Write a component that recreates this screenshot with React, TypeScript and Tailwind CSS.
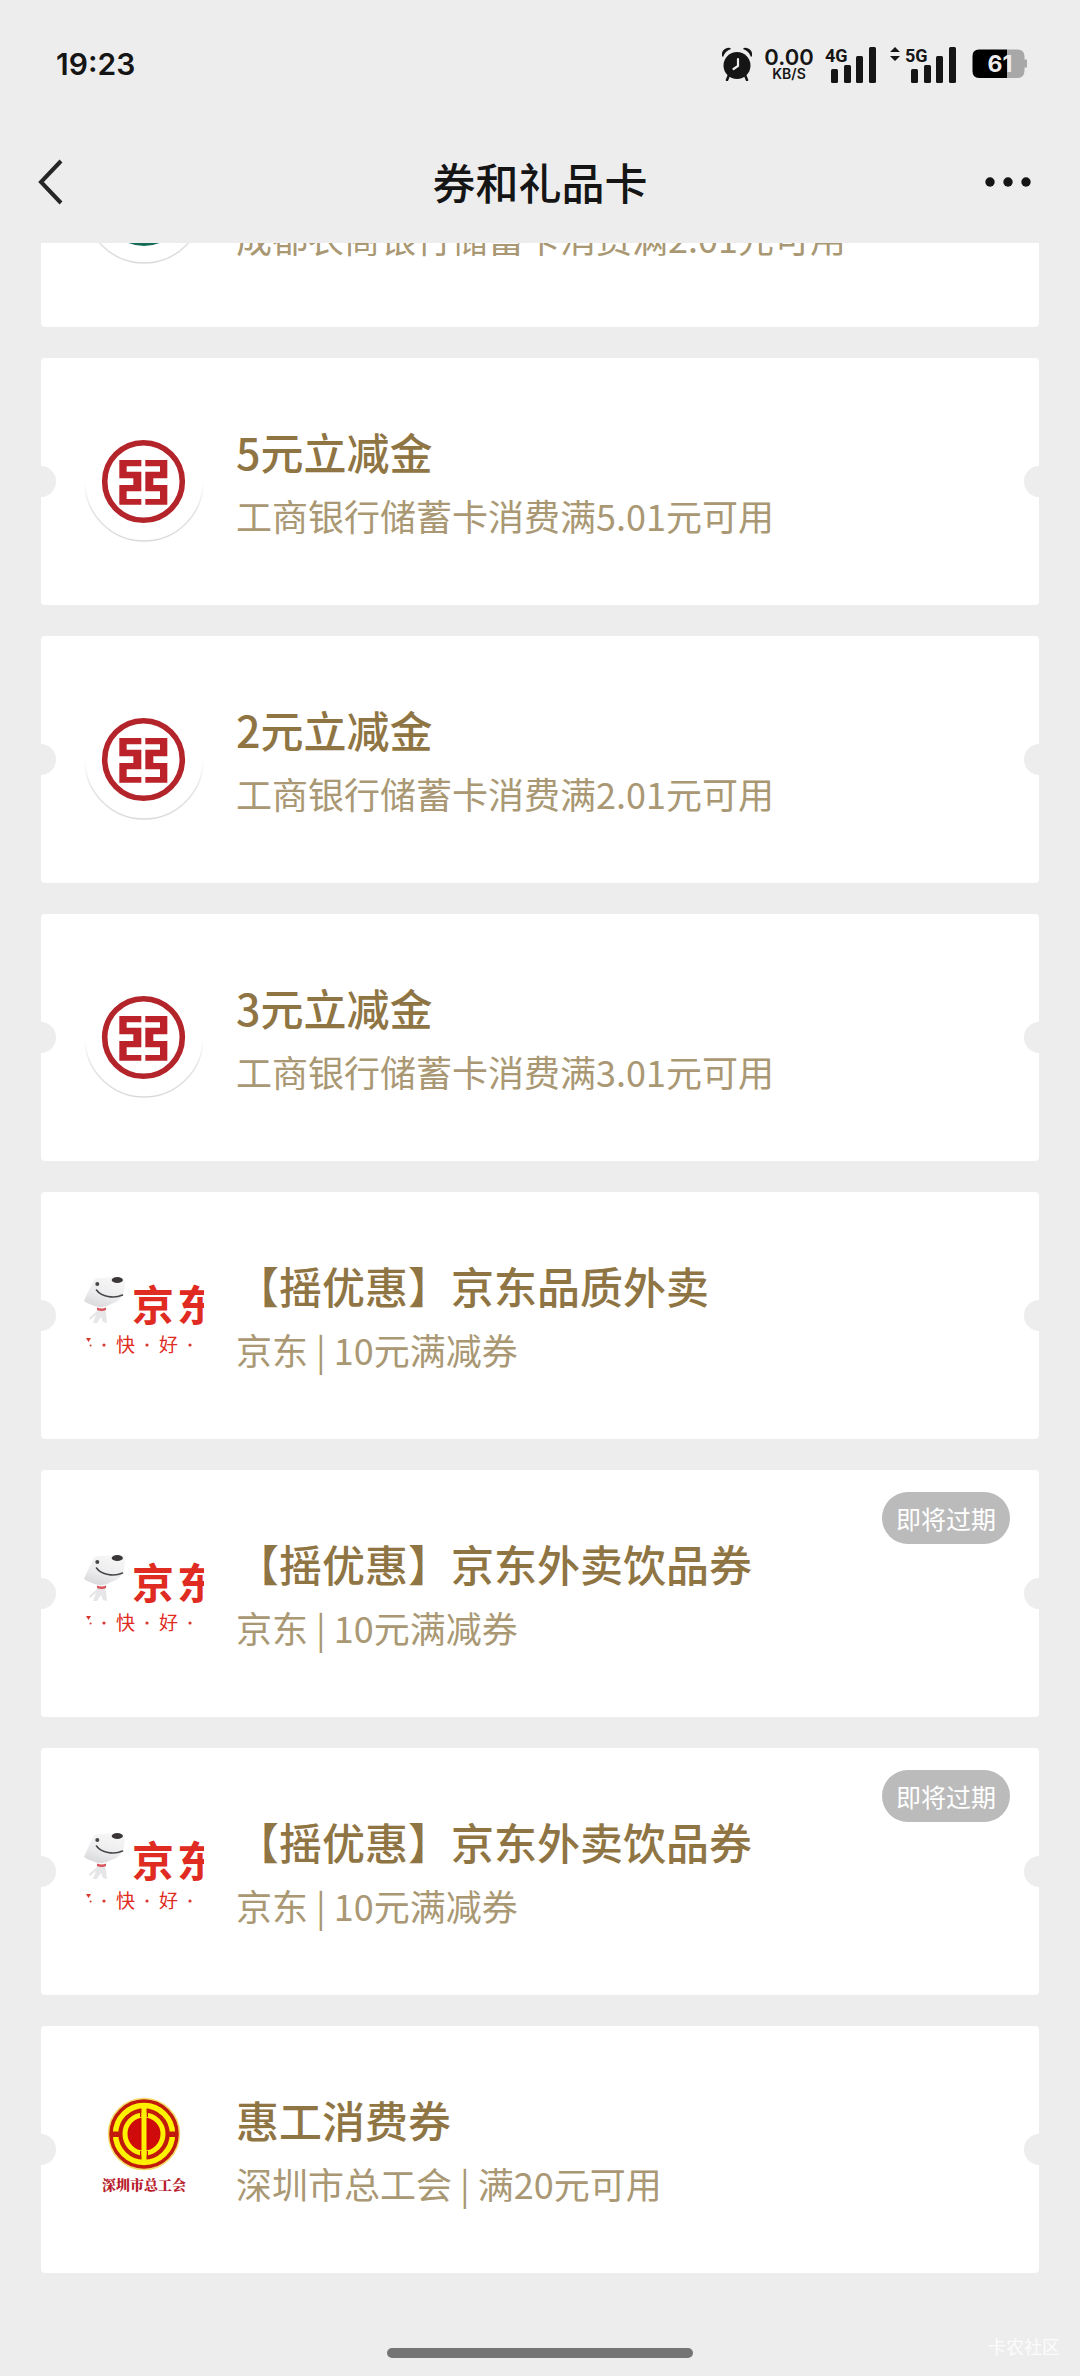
import { useId } from "react";
import type { ReactNode } from "react";

type Brand = "rural" | "icbc" | "jd" | "union";

interface Coupon {
  id: number;
  brand: Brand;
  title: string;
  detail: string;
  expiring?: boolean;
}

const coupons: Coupon[] = [
  { id: 1, brand: "rural", title: "2元立减金", detail: "成都农商银行储蓄卡消费满2.01元可用" },
  { id: 2, brand: "icbc", title: "5元立减金", detail: "工商银行储蓄卡消费满5.01元可用" },
  { id: 3, brand: "icbc", title: "2元立减金", detail: "工商银行储蓄卡消费满2.01元可用" },
  { id: 4, brand: "icbc", title: "3元立减金", detail: "工商银行储蓄卡消费满3.01元可用" },
  { id: 5, brand: "jd", title: "【摇优惠】京东品质外卖", detail: "京东 | 10元满减券" },
  { id: 6, brand: "jd", title: "【摇优惠】京东外卖饮品券", detail: "京东 | 10元满减券", expiring: true },
  { id: 7, brand: "jd", title: "【摇优惠】京东外卖饮品券", detail: "京东 | 10元满减券", expiring: true },
  { id: 8, brand: "union", title: "惠工消费券", detail: "深圳市总工会 | 满20元可用" },
];

function RoundFrame({ children }: { children: ReactNode }) {
  const id = useId();
  return (
    <svg viewBox="0 0 120 120" className="size-full" aria-hidden="true">
      <defs>
        <linearGradient id={id} x1="0" y1="0" x2="0" y2="1">
          <stop offset="0.5" stopColor="#e4e4e4" stopOpacity="0" />
          <stop offset="0.75" stopColor="#e4e4e4" />
          <stop offset="1" stopColor="#dadada" />
        </linearGradient>
      </defs>
      <circle cx="60" cy="60" r="59" fill="none" stroke={`url(#${id})`} strokeWidth="1.5" />
      {children}
    </svg>
  );
}

const HALF_GLYPH =
  "M70 78H136V97H92V113H136V172H92V195H136V212H70V153H112V133H70Z";

function IcbcLogo() {
  return (
    <RoundFrame>
      <circle cx="59.5" cy="59.5" r="38.8" fill="none" stroke="#b4252b" strokeWidth="5.6" />
      <g transform="translate(12 12) scale(0.3333)" fill="#bb2229">
        <path d={HALF_GLYPH} />
        <path d={HALF_GLYPH} transform="translate(284 0) scale(-1 1)" />
      </g>
    </RoundFrame>
  );
}

function RuralBankLogo() {
  return (
    <RoundFrame>
      <circle cx="60" cy="60" r="42" fill="#146b56" />
    </RoundFrame>
  );
}

function JdLogo() {
  const id = useId();
  return (
    <svg viewBox="0 0 120 120" className="size-full overflow-hidden" aria-hidden="true">
      <defs>
        <linearGradient id={id} x1="0.7" y1="0" x2="0.3" y2="1">
          <stop offset="0" stopColor="#f7f7f7" />
          <stop offset="0.6" stopColor="#ececee" />
          <stop offset="1" stopColor="#d9d9dc" />
        </linearGradient>
      </defs>
      <path
        d="M9 26Q10 22 15 22L33 21Q41 21 41 26Q41 34 38 40Q35 46 27 48Q21 52 15 51Q6 49 0 45Q4 35 9 26Z"
        fill={`url(#${id})`}
      />
      <path d="M14 53Q17 55 21 53L22 58L23 67L19 66L17 61L13 67H9L12 59L6 64L5 62L12 56Z" fill="#e6e6e9" />
      <path d="M13 51.5Q18 53.5 22 51.5V54Q18 56 13 54Z" fill="#d8545a" />
      <ellipse cx="33.3" cy="24" rx="5.6" ry="3" fill="#3a3638" />
      <circle cx="13.3" cy="28" r="2" fill="#4a4648" />
      <path d="M12.5 34Q16 39 24 40.5Q32 42 38.5 39" fill="none" stroke="#4a4648" strokeWidth="1.6" strokeLinecap="round" />
      <g fill="#e02b22" fontFamily='"Noto Sans CJK SC", sans-serif'>
        <text x="48" y="65" fontSize="42" fontWeight="700">京</text>
        <text x="93" y="65" fontSize="42" fontWeight="700">东</text>
        <text x="32" y="96" fontSize="19" fontWeight="400">快</text>
        <text x="75" y="96" fontSize="19" fontWeight="400">好</text>
      </g>
      <g fill="#d8382f">
        <path d="M2 82H7L4.500 86Z" />
        <circle cx="6.600" cy="89.500" r="1" />
        <circle cx="20" cy="89" r="1.600" />
        <circle cx="63" cy="89" r="1.600" />
        <circle cx="106" cy="89" r="1.600" />
      </g>
    </svg>
  );
}

function UnionLogo() {
  return (
    <svg viewBox="0 0 120 120" className="size-full" aria-hidden="true">
      <circle cx="60" cy="44" r="35.500" fill="#c11a0c" stroke="#f3dc6a" strokeWidth="1.500" />
      <circle cx="60" cy="44" r="28.500" fill="none" stroke="#fff200" strokeWidth="5.500" />
      <path d="M27 41.500H38V47H27ZM82 41.500H93V47H82Z" fill="#c11a0c" />
      <circle cx="60" cy="44" r="19" fill="#cf0a0a" stroke="#fff200" strokeWidth="5" />
      <path d="M56 21H57.500V27H56ZM62.500 21H64V27H62.500ZM56 61H57.500V67H56ZM62.500 61H64V67H62.500Z" fill="#c11a0c" />
      <path d="M57.500 16H62.500V73H57.500Z" fill="#fff200" />
      <text
        x="60"
        y="100"
        textAnchor="middle"
        fontSize="14"
        fontWeight="900"
        fill="#b81c2c"
        fontFamily='"Noto Serif CJK SC", "Noto Sans CJK SC", serif'
      >
        深圳市总工会
      </text>
    </svg>
  );
}

function BrandLogo({ brand }: { brand: Brand }) {
  if (brand === "icbc") return <IcbcLogo />;
  if (brand === "jd") return <JdLogo />;
  if (brand === "union") return <UnionLogo />;
  return <RuralBankLogo />;
}

function CouponCard({ coupon }: { coupon: Coupon }) {
  return (
    <li className="relative flex h-[247px] shrink-0 items-start overflow-hidden rounded-[4px] bg-white pl-[43px]">
      <span className="absolute top-[108px] -left-4 size-[31px] rounded-full bg-[#ededed]" />
      <span className="absolute top-[108px] -right-4 size-[31px] rounded-full bg-[#ededed]" />
      <div className="mt-16 size-[120px] shrink-0">
        <BrandLogo brand={coupon.brand} />
      </div>
      <div className="mt-[61px] ml-8 min-w-0 whitespace-nowrap">
        <h2 className="text-[43px] leading-[64px] font-medium text-[#8f7544]">{coupon.title}</h2>
        <p className="text-[36px] leading-[64px] font-normal text-[#a99873]">{coupon.detail}</p>
      </div>
      {coupon.expiring && (
        <span className="absolute top-[22px] right-[29px] rounded-full bg-[#bbbbbb] px-[14px] text-[25px] leading-[52px] text-white">
          即将过期
        </span>
      )}
    </li>
  );
}

function AlarmIcon() {
  return (
    <svg viewBox="0 0 32 34" className="h-[34px] w-8" aria-hidden="true">
      <circle cx="16" cy="18.500" r="13.500" fill="#151515" />
      <path d="M1 9Q0 3 6 1Q9 0 10 2Q4 4 2 10ZM31 9Q32 3 26 1Q23 0 22 2Q28 4 30 10Z" fill="#151515" />
      <path d="M8 28L6 33M24 28L26 33" stroke="#151515" strokeWidth="2.500" strokeLinecap="round" />
      <path d="M17 12V19L12.500 22" fill="none" stroke="#ededed" strokeWidth="2.200" strokeLinecap="round" />
    </svg>
  );
}

function SignalIcon({ label }: { label: string }) {
  return (
    <svg viewBox="0 0 52 38" className="h-[38px] w-[52px]" role="img" aria-label={label}>
      <text
        x="0"
        y="17"
        fontSize="18"
        fontWeight="700"
        fill="#151515"
        fontFamily='"Liberation Sans Narrow", Roboto, sans-serif'
      >
        {label}
      </text>
      <g fill="#151515">
        <rect x="6" y="24" width="7" height="14" rx="1.500" />
        <rect x="19" y="20" width="7" height="18" rx="1.500" />
        <rect x="31" y="11" width="7" height="27" rx="1.500" />
        <rect x="44" y="2" width="7" height="36" rx="1.500" />
      </g>
    </svg>
  );
}

function StatusBar() {
  return (
    <div className="flex h-32 shrink-0 items-center justify-between pr-[52px] pl-14 font-['Inter',sans-serif] text-[#151515]">
      <time className="text-[30px] font-semibold">19:23</time>
      <div className="flex items-center">
        <AlarmIcon />
        <div className="ml-[10px] flex w-[52px] flex-col items-center">
          <span className="text-[22px] leading-[20px] font-semibold">0.00</span>
          <span className="text-[14px] leading-[14px] font-semibold">KB/S</span>
        </div>
        <div className="mr-3 ml-[10px]">
          <SignalIcon label="4G" />
        </div>
        <svg viewBox="0 0 12 38" className="mr-1 h-[38px] w-3" aria-hidden="true">
          <path d="M6 2L11 7H1ZM1 11H11L6 16Z" fill="#151515" />
        </svg>
        <SignalIcon label="5G" />
        <svg viewBox="0 0 56 30" className="ml-[15px] h-[30px] w-14" role="img" aria-label="61%">
          <path d="M35 0.500H46Q52 0.500 52.500 7V10.500H55V18.500H52.500V22Q52 29 46 29H35Z" fill="#a8a8a8" />
          <path d="M7 0.500H35V29H7Q0.500 29 0.500 22V7Q0.500 0.500 7 0.500Z" fill="#000000" />
          <text x="28" y="23" textAnchor="middle" fontSize="23" fontWeight="700" fill="#ededed" fontFamily="Inter, sans-serif">
            61
          </text>
        </svg>
      </div>
    </div>
  );
}

export default function App() {
  return (
    <div className="relative flex h-screen flex-col overflow-hidden bg-[#ededed] font-['Noto_Sans_CJK_SC',sans-serif]">
      <StatusBar />
      <header className="flex h-[115px] shrink-0 items-start justify-between px-8">
        <button type="button" aria-label="返回" className="flex h-[108px] w-20 items-center">
          <svg viewBox="0 0 36 48" className="h-12 w-9" aria-hidden="true">
            <path d="M29 3L9 24L29 45" fill="none" stroke="#262626" strokeWidth="4" />
          </svg>
        </button>
        <h1 className="text-[43px] leading-[106px] font-medium text-[#151515]">券和礼品卡</h1>
        <button type="button" aria-label="更多" className="flex h-[108px] w-20 items-center justify-end pr-4">
          <svg viewBox="0 0 48 12" className="h-3 w-12" aria-hidden="true">
            <circle cx="6" cy="6" r="4.700" fill="#151515" />
            <circle cx="24" cy="6" r="4.700" fill="#151515" />
            <circle cx="42" cy="6" r="4.700" fill="#151515" />
          </svg>
        </button>
      </header>
      <main className="flex min-h-0 flex-1 flex-col justify-end overflow-hidden px-[41px]">
        <ul className="flex flex-col gap-[31px]">
          {coupons.map((coupon) => (
            <CouponCard key={coupon.id} coupon={coupon} />
          ))}
        </ul>
      </main>
      <footer className="flex h-[103px] shrink-0 items-end justify-center pb-[18px]">
        <div className="h-[10px] w-[306px] rounded-full bg-[#757575]" />
      </footer>
      <span className="absolute right-5 bottom-4 text-[18px] leading-7 text-white/80">卡农社区</span>
    </div>
  );
}
